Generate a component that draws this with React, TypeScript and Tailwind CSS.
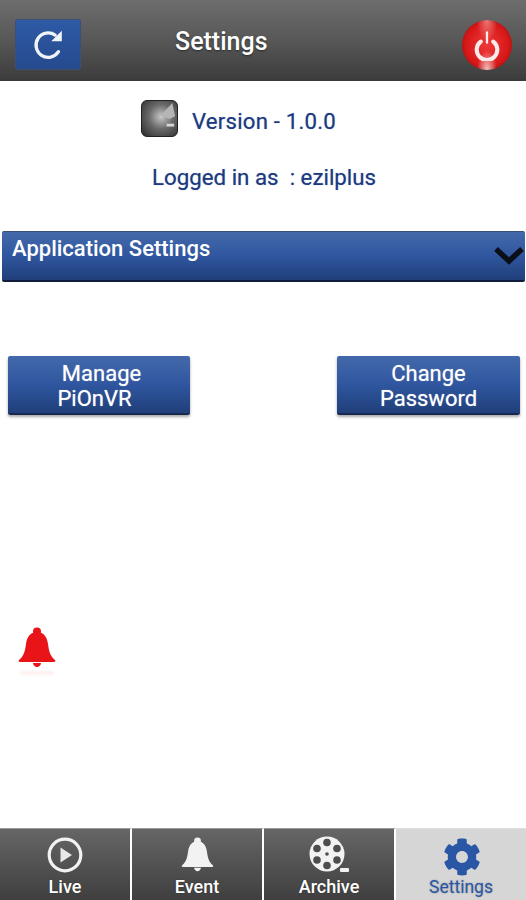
import { FaCog } from "react-icons/fa";

const blueBar = "bg-gradient-to-b from-[#4469ab] via-[#2f569f] to-[#203f7a]";
const tabDark = "bg-gradient-to-b from-[#666666] to-[#3f3f3f]";

function BellIcon({ className, fill }: { className: string; fill: string }) {
  return (
    <svg viewBox="0 0 38 42" className={className}>
      <circle cx="19" cy="4.5" r="4" fill={fill} />
      <path
        d="M19 5c7 0 10 5 11 12 1 7 2 12 7 16 1 1 0 2-1 2H2c-1 0-2-1-1-2 5-4 6-9 7-16C9 10 12 5 19 5z"
        fill={fill}
      />
      <path d="M15 36h8c0 2-2 4-4 4s-4-2-4-4z" fill={fill} />
    </svg>
  );
}

function FilmIcon() {
  return (
    <svg viewBox="0 0 40 38" className="h-[38px] w-[40px] blur-[0.4px]">
      <circle cx="18" cy="18" r="17.5" fill="#f2f2f2" />
      <circle cx="18" cy="6.5" r="3.8" fill="#4d4d4d" />
      <circle cx="18" cy="29.5" r="3.8" fill="#4d4d4d" />
      <circle cx="8" cy="12.5" r="3.8" fill="#4d4d4d" />
      <circle cx="28" cy="12.5" r="3.8" fill="#4d4d4d" />
      <circle cx="8" cy="24" r="3.8" fill="#4d4d4d" />
      <circle cx="28" cy="24" r="3.8" fill="#4d4d4d" />
      <circle cx="18" cy="18" r="1.8" fill="#4d4d4d" />
      <rect x="31" y="32" width="9" height="4" rx="1" fill="#f2f2f2" />
    </svg>
  );
}

function Tab({ label, icon, active }: { label: string; icon: React.ReactNode; active?: boolean }) {
  return (
    <div
      className={`flex flex-1 flex-col items-center border-t border-[#9a9a9a] pt-[7px] ${
        active ? "border-t-[#dedede] bg-[#d6d6d6] text-[#2a57a5]" : `${tabDark} border-r-2 border-r-white text-white`
      }`}
    >
      <div className="flex h-[38px] items-center justify-center">{icon}</div>
      <span
        className={`mt-[1px] leading-[24px] [text-shadow:0_0_2px_rgba(0,0,0,0.3)] ${
          active ? "text-[17.5px] font-normal" : "text-[18px] font-medium"
        }`}
      >
        {label}
      </span>
    </div>
  );
}

function ActionButton({ className, children }: { className: string; children: React.ReactNode }) {
  return (
    <button
      className={`flex h-[59px] flex-col items-center justify-center rounded-[2px] border-b-2 border-[#16294f] pt-[2px] ${blueBar} text-[22px] leading-[25px] text-white shadow-[0_2px_3px_rgba(0,0,0,0.35)] [text-shadow:0_0_1px_rgba(255,255,255,0.6)] ${className}`}
    >
      {children}
    </button>
  );
}

export default function App() {
  return (
    <div className="flex h-[900px] w-[526px] flex-col overflow-hidden bg-white font-['Roboto',sans-serif]">
      {/* header */}
      <header className="flex h-[81px] shrink-0 items-center border-b-2 border-[#3a3a3a] bg-gradient-to-b from-[#6d6d6d] via-[#585858] to-[#3d3d3d] pl-[15px] pr-[14px] pt-[10px]">
        <button className="flex h-[51px] w-[66px] items-center justify-center rounded-[2px] border border-[#3d4f72] bg-gradient-to-b from-[#2e5aa6] to-[#264a8d]">
          <svg viewBox="0 0 28 28" className="h-[31px] w-[31px] blur-[0.3px]" fill="none" stroke="#f0f3f8" strokeWidth="3">
            <path d="M23 20.5A11 11 0 1 1 20 5.5" strokeLinecap="round" />
            <path d="M26 1.5v9.5h-9.5z" fill="#f0f3f8" stroke="none" />
          </svg>
        </button>
        <h1 className="mb-[6px] ml-[94px] text-[25px] font-medium leading-none text-white [text-shadow:0_1px_2px_rgba(0,0,0,0.5)]">
          Settings
        </h1>
        <div className="ml-auto flex h-[50px] w-[50px] items-center justify-center rounded-full bg-[radial-gradient(ellipse_at_50%_100%,rgba(255,255,255,0.75)_0%,rgba(255,255,255,0)_28%),radial-gradient(ellipse_at_50%_0%,rgba(255,200,200,0.55)_0%,rgba(255,255,255,0)_30%),radial-gradient(circle_at_50%_50%,#ee3a3a_0%,#d81818_60%,#6e0808_100%)]">
          <svg viewBox="0 0 28 28" className="h-[32px] w-[32px] blur-[0.4px]" fill="none" stroke="#fbeaea" strokeWidth="3.6" strokeLinecap="round">
            <path d="M8.5 11a9 9 0 1 0 11 0" />
            <path d="M14 3v9" strokeWidth="2" />
          </svg>
        </div>
      </header>

      {/* version info */}
      <div className="mt-[19px] flex items-center pl-[141px]">
        <div className="h-[37px] w-[37px] rounded-[6px] border border-[#222] bg-[radial-gradient(circle_at_55%_45%,#c8c8c8_0%,#6a6a6a_45%,#2a2a2a_100%)]">
          <svg viewBox="0 0 37 37" className="h-full w-full blur-[0.5px]">
            <path d="M20 15 32 2l3 14-6 3z" fill="#b5b5b5" />
            <path d="M26 24h8v3h-8z" fill="#d5d5d5" />
          </svg>
        </div>
        <span className="ml-[14px] pt-[6px] text-[22.2px] leading-none tracking-[0.2px] text-[#1c3a80] [text-shadow:0_0_1px_rgba(28,58,128,0.5)]">
          Version - 1.0.0
        </span>
      </div>
      <p className="mt-[26px] pl-[152px] text-[22.3px] leading-[28px] text-[#1c3a80] [text-shadow:0_0_1px_rgba(28,58,128,0.5)]">
        Logged in as&nbsp; : ezilplus
      </p>

      {/* application settings bar */}
      <div
        className={`relative ml-[2px] mr-[1px] mt-[40px] h-[51px] rounded-[2px] border-y border-b-2 border-t-[#3a4f78] border-b-[#0f1d3a] ${blueBar} pl-[10px] pt-[3px] text-[22px] font-medium leading-[28px] text-white`}
      >
        Application Settings
        <svg viewBox="0 0 30 20" className="absolute right-[1px] top-[14px] h-[20px] w-[30px]" fill="none" stroke="#0b0f18" strokeWidth="5.5">
          <path d="M2 3l13 12L28 3" />
        </svg>
      </div>

      {/* actions */}
      <div className="mt-[74px] flex justify-between pl-[8px] pr-[6px]">
        <ActionButton className="w-[182px]">
          <span className="pl-[5px]">Manage</span>
          <span className="pr-[9px]">PiOnVR</span>
        </ActionButton>
        <ActionButton className="w-[183px]">
          <span>Change</span>
          <span>Password</span>
        </ActionButton>
      </div>

      {/* alert bell */}
      <div className="mt-[212px] flex-1 pl-[18px]">
        <BellIcon className="h-[42px] w-[38px] blur-[0.4px]" fill="#e81418" />
        <div className="ml-[2px] mt-[2px] h-[4px] w-[34px] rounded-full bg-[#fdf0f0] blur-[1px]" />
      </div>

      {/* bottom tabs */}
      <nav className="flex h-[72px] shrink-0">
        <Tab
          label="Live"
          icon={
            <svg viewBox="0 0 36 36" className="h-[36px] w-[36px] blur-[0.3px]" fill="none">
              <circle cx="18" cy="18" r="15.8" stroke="#f2f2f2" strokeWidth="3.2" />
              <path d="M13.5 10.5 25 18l-11.5 7.5z" fill="#e8e8e8" />
            </svg>
          }
        />
        <Tab label="Event" icon={<BellIcon className="h-[36px] w-[33px] blur-[0.3px]" fill="#f2f2f2" />} />
        <Tab label="Archive" icon={<FilmIcon />} />
        <Tab active label="Settings" icon={<FaCog className="ml-[1px] mt-[3px] h-[38px] w-[38px] text-[#2a57a5]" />} />
      </nav>
    </div>
  );
}
